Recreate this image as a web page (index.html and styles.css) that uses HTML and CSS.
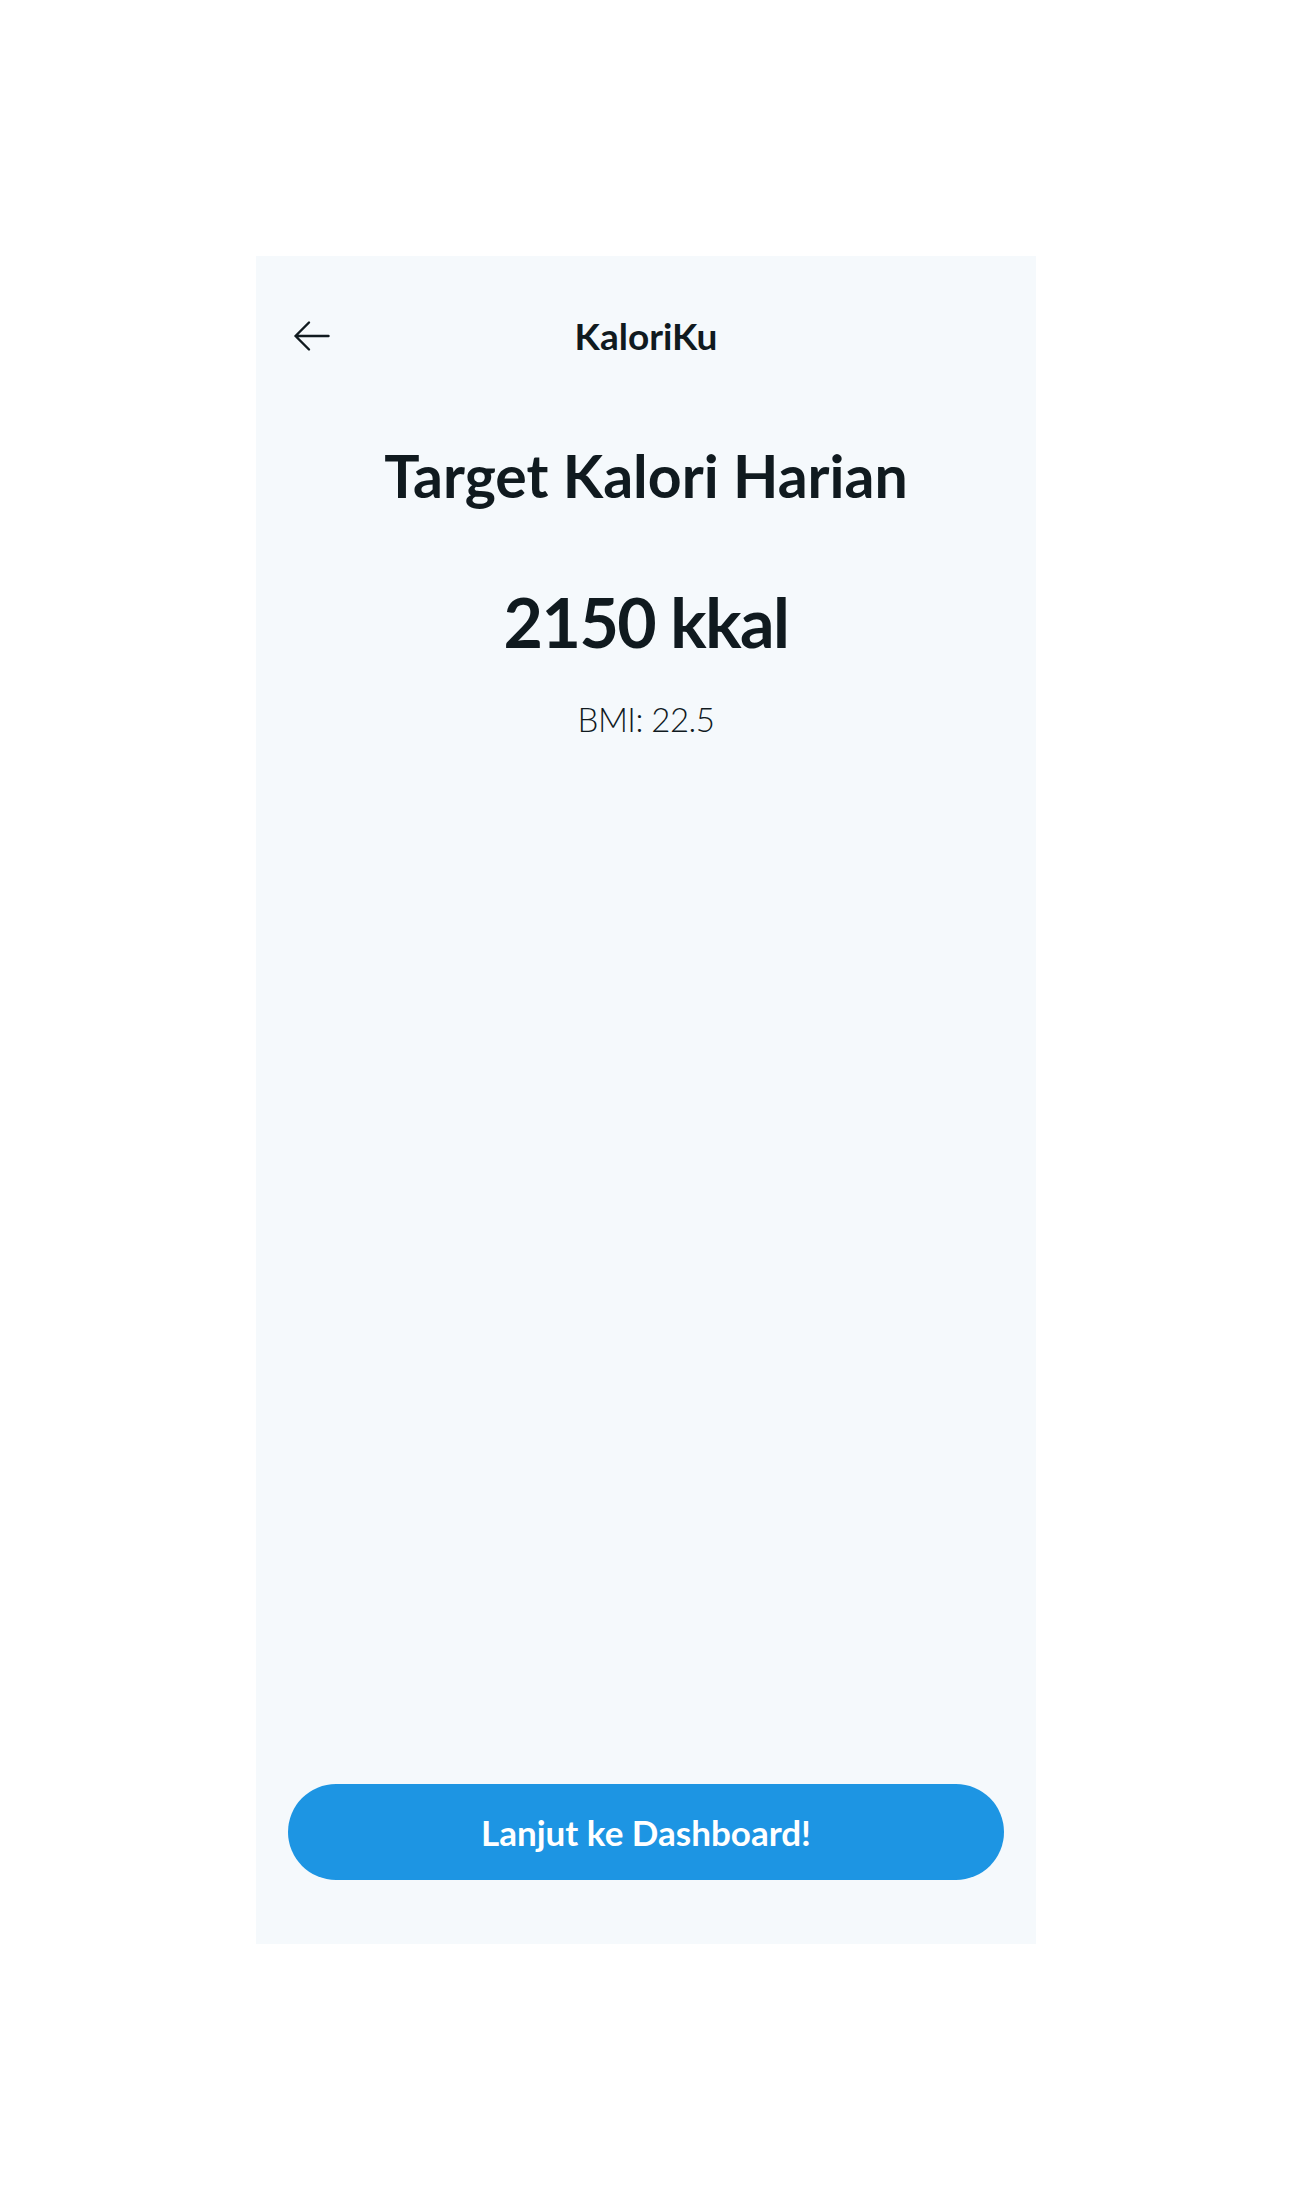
FILE: index.html
```html
<!DOCTYPE html>
<html>
<head>
<meta charset="utf-8">
<link rel="stylesheet" href="styles.css">
</head>
<body>
<div class="screen">
  <header class="topbar">
    <button class="back" aria-label="Kembali">
      <svg viewBox="0 0 256 256" width="48" height="48"><path d="M216 128H40M112 56L40 128l72 72" fill="none" stroke="#101a1f" stroke-width="13" stroke-linecap="round" stroke-linejoin="round"/></svg>
    </button>
    <div class="brand">KaloriKu</div>
    <div class="spacer"></div>
  </header>
  <main class="content">
    <h1 class="title">Target Kalori Harian</h1>
    <div class="kcal">2150 kkal</div>
    <div class="bmi">BMI: 22.5</div>
  </main>
  <button class="cta">Lanjut ke Dashboard!</button>
</div>
</body>
</html>
```
FILE: styles.css
```css
body { margin: 0; background: #ffffff; font-family: Lato, "Liberation Sans", sans-serif; }
.screen { width: 780px; height: 1688px; margin: 256px auto 0; background: #f5f9fc; box-sizing: border-box; padding: 56px 32px 64px; display: flex; flex-direction: column; }
.topbar { display: grid; grid-template-columns: 48px 1fr 48px; align-items: center; height: 48px; }
.back { border: 0; padding: 0; background: none; width: 48px; height: 48px; display: flex; cursor: pointer; }
.brand { text-align: center; font-weight: 700; font-size: 37px; line-height: 48px; color: #101a1f; }
.content { flex: 1; display: flex; flex-direction: column; align-items: center; color: #101a1f; }
.title { margin: 80px 0 0; font-size: 59px; line-height: 72px; font-weight: 700; }
.kcal { margin-top: 70px; font-size: 68px; line-height: 80px; font-weight: 700; letter-spacing: -1.5px; }
.bmi { margin-top: 37px; font-size: 33px; line-height: 40px; font-weight: 300; letter-spacing: -0.5px; }
.cta { height: 96px; flex: none; border: 0; border-radius: 48px; background: #1d95e3; color: #ffffff; font-family: inherit; font-size: 35px; font-weight: 700; line-height: 40px; cursor: pointer; }
```
